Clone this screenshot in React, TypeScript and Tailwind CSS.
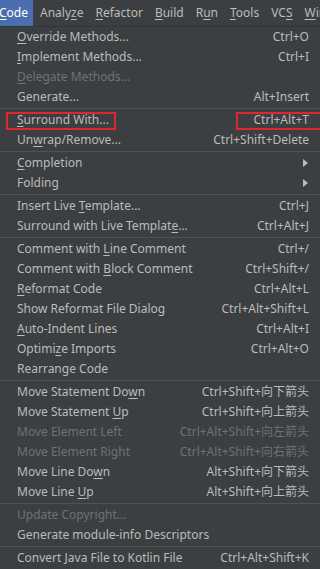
import { ReactElement } from "react";

type Item =
    | { sep: true }
    | { label: string; u?: number; key?: string; disabled?: boolean; sub?: boolean; boxed?: boolean; sep?: false };

// 菜单项: u = 带下划线的字母位置
const items: Item[] = [
    { label: "Override Methods...", u: 0, key: "Ctrl+O" },
    { label: "Implement Methods...", u: 0, key: "Ctrl+I" },
    { label: "Delegate Methods...", u: 0, disabled: true },
    { label: "Generate...", key: "Alt+Insert" },
    { sep: true },
    { label: "Surround With...", u: 0, key: "Ctrl+Alt+T", boxed: true },
    { label: "Unwrap/Remove...", u: 2, key: "Ctrl+Shift+Delete" },
    { sep: true },
    { label: "Completion", u: 0, sub: true },
    { label: "Folding", sub: true },
    { sep: true },
    { label: "Insert Live Template...", u: 12, key: "Ctrl+J" },
    { label: "Surround with Live Template...", u: 26, key: "Ctrl+Alt+J" },
    { sep: true },
    { label: "Comment with Line Comment", u: 13, key: "Ctrl+/" },
    { label: "Comment with Block Comment", u: 13, key: "Ctrl+Shift+/" },
    { label: "Reformat Code", u: 0, key: "Ctrl+Alt+L" },
    { label: "Show Reformat File Dialog", key: "Ctrl+Alt+Shift+L" },
    { label: "Auto-Indent Lines", u: 0, key: "Ctrl+Alt+I" },
    { label: "Optimize Imports", u: 6, key: "Ctrl+Alt+O" },
    { label: "Rearrange Code" },
    { sep: true },
    { label: "Move Statement Down", u: 17, key: "Ctrl+Shift+向下箭头" },
    { label: "Move Statement Up", u: 15, key: "Ctrl+Shift+向上箭头" },
    { label: "Move Element Left", disabled: true, key: "Ctrl+Alt+Shift+向左箭头" },
    { label: "Move Element Right", disabled: true, key: "Ctrl+Alt+Shift+向右箭头" },
    { label: "Move Line Down", u: 12, key: "Alt+Shift+向下箭头" },
    { label: "Move Line Up", u: 10, key: "Alt+Shift+向上箭头" },
    { sep: true },
    { label: "Update Copyright...", disabled: true },
    { label: "Generate module-info Descriptors" },
    { sep: true },
    { label: "Convert Java File to Kotlin File", key: "Ctrl+Alt+Shift+K" },
];

const menus: [string, number][] = [
    ["Analyze", 5],
    ["Refactor", 0],
    ["Build", 0],
    ["Run", 1],
    ["Tools", 0],
    ["VCS", 2],
    ["Window", 0],
];

function Mnemonic({ text, u }: { text: string; u?: number }): ReactElement {
    if (u === undefined) return <>{text}</>;
    return (
        <>
            {text.slice(0, u)}
            <span className="underline underline-offset-2">{text[u]}</span>
            {text.slice(u + 1)}
        </>
    );
}

function App(): ReactElement {
    return (
        <div
            className="w-[320px] h-[569px] overflow-hidden bg-[#3c3f41] text-[#bbbbbb] text-[12px]"
            style={{ fontFamily: '"Noto Sans", "Noto Sans CJK SC", sans-serif' }}
        >
            {/* 菜单栏 */}
            <div className="h-[27px] flex items-center whitespace-nowrap border-b border-[#323436] text-[12px]">
                <div className="h-full bg-[#4b6eaf] text-white flex items-center w-[33px] shrink-0">
                    <span className="-ml-[1px]">
                        <Mnemonic text="Code" u={0} />
                    </span>
                </div>
                {menus.map(([m, u], i) => (
                    <span key={m} className={`${i === 0 ? "ml-[7px]" : "ml-[12px]"} shrink-0`}>
                        <Mnemonic text={m} u={u} />
                    </span>
                ))}
            </div>

            {/* 下拉菜单 */}
            <div className="flex flex-col">
                {items.map((it, i) =>
                    it.sep ? (
                        <div key={i} className="h-[3px] flex items-center">
                            <div className="h-px w-full bg-[#505356]" />
                        </div>
                    ) : (
                        <div
                            key={i}
                            className={`relative h-[20px] flex items-center justify-between pl-[17px] pr-[11px] whitespace-nowrap ${
                                it.disabled ? "text-[#6f7173]" : "text-[#bbbbbb]"
                            }`}
                        >
                            <span>
                                <Mnemonic text={it.label} u={it.u} />
                            </span>
                            {it.key && <span>{it.key}</span>}
                            {it.sub && (
                                <svg width="5" height="8" viewBox="0 0 5 8" className="mr-[1px]">
                                    <path d="M0 0 L5 4 L0 8 Z" fill="#bbbbbb" />
                                </svg>
                            )}
                            {it.boxed && (
                                <>
                                    <div className="absolute left-[6px] top-[2px] w-[110px] h-[18px] border-2 border-[#e3262d]" />
                                    <div className="absolute left-[236px] top-[2px] w-[90px] h-[18px] border-2 border-[#e3262d]" />
                                </>
                            )}
                        </div>
                    )
                )}
            </div>
        </div>
    );
}

export default App;
